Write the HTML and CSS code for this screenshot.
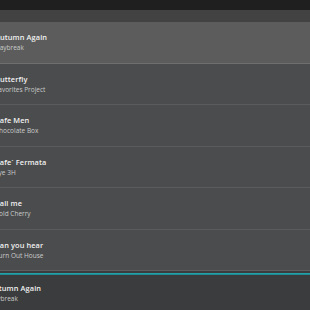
FILE: index.html
```html
<!DOCTYPE html>
<html>
<head>
<meta charset="utf-8">
<link rel="stylesheet" href="styles.css">
</head>
<body>
<div class="screen">
  <div class="topbar"></div>
  <div class="band"></div>
  <ul class="list">
    <li class="row active"><span class="title">Autumn Again</span><span class="sub">Daybreak</span></li>
    <li class="row"><span class="title">Butterfly</span><span class="sub">Favorites Project</span></li>
    <li class="row"><span class="title">Cafe Men</span><span class="sub">Chocolate Box</span></li>
    <li class="row"><span class="title">Cafe` Fermata</span><span class="sub">Eye 3H</span></li>
    <li class="row"><span class="title">Call me</span><span class="sub">Cold Cherry</span></li>
    <li class="row last"><span class="title">Can you hear</span><span class="sub">Turn Out House</span></li>
  </ul>
  <div class="divider"></div>
  <div class="row next"><span class="title">Autumn Again</span><span class="sub">Daybreak</span></div>
</div>
</body>
</html>
```
FILE: styles.css
```css
html, body {
  margin: 0;
  padding: 0;
  background: #3b3c3d;
}
.screen {
  width: 310px;
  height: 310px;
  overflow: hidden;
  display: flex;
  flex-direction: column;
  font-family: "Open Sans", "DejaVu Sans", sans-serif;
  background: #3b3c3d;
}
.topbar {
  height: 10px;
  background: #1f1f1f;
  flex: none;
}
.band {
  height: 12px;
  background: #424242;
  flex: none;
}
.list {
  list-style: none;
  margin: 0;
  padding: 0;
  flex: none;
}
.row {
  box-sizing: border-box;
  height: 41.6px;
  border-bottom: 1px solid #5a5b5b;
  background: #4a4c4d;
  display: flex;
  flex-direction: column;
  padding-top: 10px;
  overflow: hidden;
  white-space: nowrap;
}
.row.active {
  background: #5b5c5b;
  border-bottom-color: #6d6e6d;
}
.row.last {
  height: 41px;
  border-bottom: 1px solid #5e5e5e;
}
.title {
  font-size: 7.4px;
  line-height: 10px;
  font-weight: 600;
  letter-spacing: 0.1px;
  color: #f2f2f2;
  margin-left: -5px;
}
.sub {
  font-size: 6.5px;
  line-height: 10px;
  margin-top: 1px;
  color: #cbcbcb;
  margin-left: -5px;
}
.divider {
  height: 1px;
  margin-top: 2px;
  background: #24a0a8;
  border-bottom: 1px solid #1f8a92;
  flex: none;
}
.row.next {
  height: auto;
  flex: 1;
  border: none;
  background: #3b3c3d;
  padding-top: 8px;
}
.row.next .title,
.row.next .sub {
  margin-left: -11px;
}
```
